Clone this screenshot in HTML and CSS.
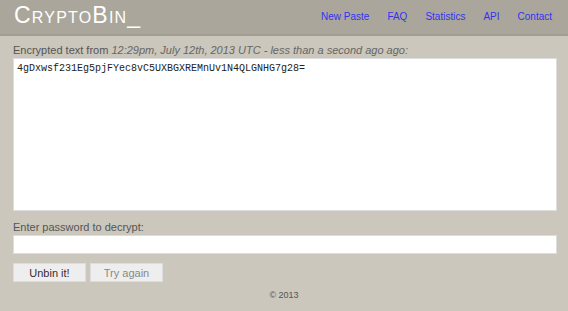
FILE: index.html
```html
<!DOCTYPE html>
<html>

<head>
    <title>CryptoBin</title>
    <meta charset="UTF-8">
    <meta name="viewport" content="width=device-width, initial-scale=1.0">
    <link rel="stylesheet" href="styles.css">
</head>

<body>
    <header class="header">
        <div class="logo">CryptoBin_</div>
        <nav class="nav">
            <a class="nav-item" href="#">New Paste</a>
            <a class="nav-item" href="#">FAQ</a>
            <a class="nav-item" href="#">Statistics</a>
            <a class="nav-item" href="#">API</a>
            <a class="nav-item" href="#">Contact</a>
        </nav>
    </header>

    <main class="content">
        <label class="label">Encrypted text from <i>12:29pm, July 12th, 2013 UTC - less than a second ago ago:</i></label>
        <textarea class="paste" readonly>4gDxwsf231Eg5pjFYec8vC5UXBGXREMnUv1N4QLGNHG7g28=</textarea>

        <label class="label" for="pass">Enter password to decrypt:</label>
        <input class="pass" type="password" id="pass">

        <div class="buttons">
            <button class="btn">Unbin it!</button>
            <button class="btn btn-off">Try again</button>
        </div>
    </main>

    <footer class="footer">
        <p>&copy; 2013</p>
    </footer>
</body>

</html>
```
FILE: styles.css
```css
body {
    margin: 0;
    font-family: "Liberation Sans", Arial, sans-serif;
    font-size: 11px;
    background-color: #cbc7bc;
    color: #555;
}

.header {
    height: 34px;
    background-color: #aaa69c;
    border-bottom: 2px solid #a29e94;
    display: flex;
    align-items: center;
    justify-content: space-between;
    padding: 0 16px 0 14px;
}

.logo {
    color: #fff;
    font-size: 23px;
    font-variant: small-caps;
    letter-spacing: 1.2px;
    margin-top: -3px;
}

.nav {
    display: flex;
    gap: 18px;
    margin-top: -2px;
}

.nav-item {
    color: #3333ee;
    text-decoration: none;
    font-size: 10px;
}

.content {
    padding: 7px 11px 0 13px;
    display: flex;
    flex-direction: column;
}

.label {
    display: block;
    line-height: 14px;
    margin-bottom: 1px;
}

.label i {
    color: #666;
}

.paste {
    height: 153px;
    box-sizing: border-box;
    border: 1px solid #ddd;
    background-color: #fff;
    font-family: "Liberation Mono", "Courier New", monospace;
    font-size: 10px;
    color: #222;
    padding: 4px 3px;
    resize: none;
    margin: 0 0 9px 0;
    outline: none;
}

.pass {
    height: 19px;
    box-sizing: border-box;
    border: 1px solid #ddd;
    background-color: #fff;
    margin: 0 0 9px 0;
    outline: none;
}

.buttons {
    display: flex;
    gap: 4px;
}

.btn {
    width: 73px;
    height: 19px;
    border: 1px solid #ddd;
    background-color: #eee;
    font-family: "Liberation Sans", Arial, sans-serif;
    font-size: 11px;
    color: #3a2a30;
    padding: 0;
}

.btn-off {
    color: #888;
}

.footer {
    text-align: center;
    font-size: 9px;
    color: #555;
    padding-top: 8px;
}

.footer p {
    margin: 0;
}
```
